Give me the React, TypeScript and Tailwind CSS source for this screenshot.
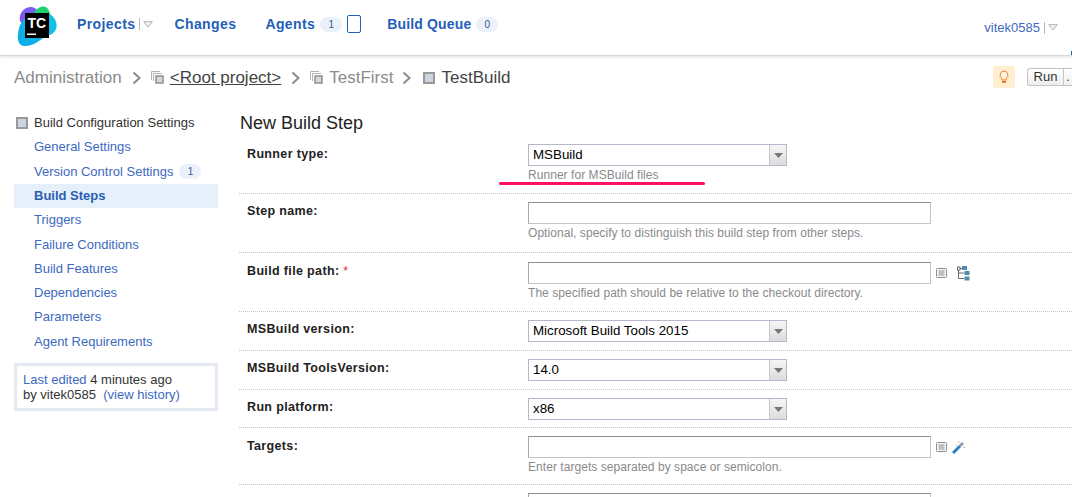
import type { ReactNode } from "react";

const sideLinks = ["General Settings", "Version Control Settings", "Build Steps", "Triggers", "Failure Conditions", "Build Features", "Dependencies", "Parameters", "Agent Requirements"];

function Logo() {
  return (
    <svg width="40" height="41" viewBox="0 0 40 41" className="shrink-0">
      <defs>
        <linearGradient id="tcBlue" x1="0" y1="1" x2="1" y2="0">
          <stop offset="0" stopColor="#0ba8e8" />
          <stop offset="1" stopColor="#12c6e6" />
        </linearGradient>
      </defs>
      <path d="M3 16C1 7 9 1 15 2c4 1 7 4 9 6L8 22z" fill="#7b5cf0" />
      <path d="M17 8c3-6 11-9 14-4 2 3 3 6 3 10H24z" fill="#1fd26f" />
      <path d="M32 9c6 2 9 10 7 15-2 6-9 6-13 9-6 5-12 8-18 8-6 0-8-6-7-12 1-7 2-11 7-15z" fill="url(#tcBlue)" />
      <rect x="8" y="8" width="24" height="25" fill="#000" />
      <path d="M10 28.5h9V30h-9z" fill="#fff" />
      <text x="10.5" y="23" fill="#fff" fontSize="14" fontWeight="700" fontFamily="Liberation Sans, sans-serif">TC</text>
    </svg>
  );
}

function Caret() {
  return (
    <span className="ml-1 flex items-center gap-[3px]">
      <span className="h-[12px] w-px bg-[#b5b5b5]" />
      <svg width="10" height="7" viewBox="0 0 10 7"><path d="M.7.7h8.6L5 6z" fill="#f4f4f4" stroke="#b0b0b0" /></svg>
    </span>
  );
}

function Badge({ n, className = "" }: { n: string; className?: string }) {
  return <span className={`flex h-[15px] w-[22px] items-center justify-center rounded-full bg-[#eaf1fa] text-[10px] font-normal tracking-normal text-[#3a5a8c] ${className}`}>{n}</span>;
}

function Chevron() {
  return (
    <svg width="10" height="14" viewBox="0 0 10 14" className="shrink-0"><path d="M1.5 1.5 7.5 7l-6 5.5" fill="none" stroke="#8c8c8c" strokeWidth="2" /></svg>
  );
}

function ProjectIcon() {
  return (
    <svg width="13" height="13" viewBox="0 0 13 13" className="shrink-0">
      <path d="M.5 9V.5H9" fill="none" stroke="#b4b4b4" />
      <path d="M2.5 10V2.5H11" fill="none" stroke="#b4b4b4" />
      <rect x="5" y="5" width="7" height="7" fill="#cfd8e3" stroke="#8f8f8f" strokeWidth="1.5" />
    </svg>
  );
}

function BuildIcon({ className = "" }: { className?: string }) {
  return <span className={`h-[12px] w-[12px] shrink-0 border-2 border-[#999] bg-[#cbd6e2] ${className}`} />;
}

function Select({ value }: { value: string }) {
  return (
    <div className="flex h-[22px] w-[259px] border border-[#b4b8c8] bg-white">
      <span className="flex-1 pl-[4px] text-[13.33px] leading-[20px] text-black">{value}</span>
      <span className="flex w-[17px] items-center justify-center border-l border-[#c8c8c8] bg-gradient-to-b from-[#f6f6f6] to-[#dcdcdc]">
        <svg width="9" height="5" viewBox="0 0 9 5"><path d="M0 0h9L4.5 5z" fill="#777" /></svg>
      </span>
    </div>
  );
}

function TextInput() {
  return <div className="h-[22px] w-[403px] border border-[#c4c4c4] border-t-[#8f8f8f] border-l-[#a8a8a8] bg-white" />;
}

function ListIcon() {
  return (
    <svg width="11" height="10" viewBox="0 0 11 10" className="block shrink-0">
      <rect x=".5" y=".5" width="10" height="9" rx="1" fill="#f4f5f6" stroke="#8c8c8c" />
      <path d="M2.5 3h6M2.5 5h6M2.5 7h6" stroke="#8a8a8a" />
    </svg>
  );
}

function TreeIcon() {
  return (
    <svg width="13" height="15" viewBox="0 0 13 15" className="block shrink-0">
      <path d="M1.5 4v8.5M3 2.5h2M1.5 7H7M1.5 12.5H7" fill="none" stroke="#6b6b6b" />
      <rect x=".5" y="1" width="2.5" height="3" fill="#fff" stroke="#6b6b6b" />
      <rect x="5" y="0" width="5" height="4" fill="#4f8cab" />
      <rect x="7.5" y="5" width="5" height="4" fill="#4f8cab" />
      <rect x="7.5" y="10.5" width="5" height="4" fill="#4f8cab" />
    </svg>
  );
}

function WandIcon() {
  return (
    <svg width="13" height="13" viewBox="0 0 13 13" className="block shrink-0">
      <path d="M1 12 8 5" stroke="#2f7fc0" strokeWidth="3" />
      <path d="M8 5 11 2" stroke="#8fa0b0" strokeWidth="3" />
      <path d="M6 1h1.5M11.5 6.5H13M4 4h1" stroke="#e08a6a" />
    </svg>
  );
}

function Row({ label, required, hint, children, h, labelPt = "pt-[1px]" }: { label: string; required?: boolean; hint?: string; children: ReactNode; h: string; labelPt?: string }) {
  return (
    <div className={`-ml-[1px] flex border-b border-dotted border-[#c4c4c4] pl-[8px] ${h}`}>
      <div className={`w-[281px] shrink-0 text-[12.5px] font-bold leading-[16px] tracking-[0.35px] text-[#222] ${labelPt}`}>
        {label}
        {required && <span className="font-normal text-[#d33]"> *</span>}
      </div>
      <div>
        {children}
        {hint && <div className="mt-[2px] text-[12px] leading-[15px] tracking-[0.05px] text-[#8a8a8a]">{hint}</div>}
      </div>
    </div>
  );
}

export default function App() {
  return (
    <div className="relative h-[497px] w-[1072px] overflow-hidden bg-white font-['Liberation_Sans',sans-serif]">
      {/* Top nav */}
      <header className="flex h-[56px] items-center justify-between border-b border-[#d8d8d8] pl-[17px] pr-[14px] shadow-[0_1px_3px_rgba(0,0,0,0.12)]">
        <div className="flex items-center">
          <div className="mb-[5px]"><Logo /></div>
          <nav className="mb-[7px] flex items-center text-[14px] font-bold tracking-[0.4px] text-[#2460b8]">
            <span className="ml-[20px]">Projects</span>
            <Caret />
            <span className="ml-[21px]">Changes</span>
            <span className="ml-[29px]">Agents</span>
            <Badge n="1" className="ml-[5px]" />
            <span className="ml-[5px] h-[18px] w-[14px] rounded-[2px] border border-[#2460b8]" />
            <span className="ml-[26px] tracking-[0.15px]">Build Queue</span>
            <Badge n="0" className="ml-[5px]" />
          </nav>
        </div>
        <div className="flex items-center text-[13px] text-[#3d69c0]">
          vitek0585
          <Caret />
        </div>
      </header>

      {/* Breadcrumb */}
      <div className="flex h-[43px] items-center justify-between pl-[14px] text-[17px]">
        <div className="flex items-center text-[#8c8c8c]">
          <span>Administration</span>
          <span className="ml-[10px] mr-[9px]"><Chevron /></span>
          <ProjectIcon />
          <span className="ml-[6px] text-[#444] underline">&lt;Root project&gt;</span>
          <span className="ml-[10px] mr-[9px]"><Chevron /></span>
          <ProjectIcon />
          <span className="ml-[6px]">TestFirst</span>
          <span className="ml-[9px] mr-[11px]"><Chevron /></span>
          <BuildIcon />
          <span className="ml-[6px] text-[#444]">TestBuild</span>
        </div>
        <div className="mb-[2px] flex items-center">
          <span className="flex h-[22px] w-[22px] items-center justify-center rounded-[3px] bg-[#ffeed2]">
            <svg width="10" height="14" viewBox="0 0 10 14">
              <path d="M5 1a4 4 0 0 0-2.2 7.3V10h4.4V8.3A4 4 0 0 0 5 1z" fill="#fff4e2" stroke="#f08030" />
              <path d="M3 11h4v1l-1 1H4l-1-1z" fill="#f06a10" />
            </svg>
          </span>
          <span className="ml-[12px] flex h-[18px] w-[45px] overflow-hidden rounded-l-[3px] border border-r-0 border-[#c4c4c4] bg-gradient-to-b from-white to-[#eeeeee] text-[13px] leading-[16px] text-[#333]">
            <span className="w-[36px] border-r border-[#c4c4c4] text-center">Run</span>
            <span className="pl-[2px]">.</span>
          </span>
        </div>
      </div>

      <div className="flex">
        {/* Sidebar */}
        <aside className="ml-[14px] w-[204px] shrink-0 pt-[12px] text-[13px]">
          <div className="flex h-[24px] items-center pl-[2px] text-[#333]">
            <BuildIcon className="mr-[6px]" />
            Build Configuration Settings
          </div>
          {sideLinks.map((link) => (
            <div
              key={link}
              className={`flex h-[24.3px] items-center pl-[20px] ${link === "Build Steps" ? "bg-[#e6f0fb] font-bold text-[#2a5db0]" : "text-[#3d69c0]"}`}
            >
              {link}
              {link === "Version Control Settings" && <Badge n="1" className="ml-[6px]" />}
            </div>
          ))}
          <div className="mt-[9px] border-[3px] border-[#e4e8f0] px-[6px] py-[6px] leading-[15px] text-[#333]">
            <span className="text-[#3d69c0]">Last edited</span> 4 minutes ago
            <br />
            by vitek0585&nbsp; <span className="text-[#3d69c0]">(view history)</span>
          </div>
        </aside>

        {/* Form */}
        <main className="ml-[22px] flex-1 pt-[14px]">
          <h1 className="mb-[2px] text-[18px] leading-[20px] text-[#222]">New Build Step</h1>
          <Row label="Runner type:" hint="Runner for MSBuild files" h="h-[59px] pt-[9px]" labelPt="pt-[2px]">
            <Select value="MSBuild" />
          </Row>
          <Row label="Step name:" hint="Optional, specify to distinguish this build step from other steps." h="h-[59px] pt-[8px]">
            <TextInput />
          </Row>
          <Row label="Build file path:" required hint="The specified path should be relative to the checkout directory." h="h-[59px] pt-[9px]">
            <div className="flex items-center">
              <TextInput />
              <span className="ml-[5px]"><ListIcon /></span>
              <span className="ml-[10px]"><TreeIcon /></span>
            </div>
          </Row>
          <Row label="MSBuild version:" h="h-[39px] pt-[8px]">
            <Select value="Microsoft Build Tools 2015" />
          </Row>
          <Row label="MSBuild ToolsVersion:" h="h-[39px] pt-[8px]">
            <Select value="14.0" />
          </Row>
          <Row label="Run platform:" h="h-[38px] pt-[8px]">
            <Select value="x86" />
          </Row>
          <Row label="Targets:" hint="Enter targets separated by space or semicolon." h="h-[57px] pt-[8px]" labelPt="pt-[2px]">
            <div className="flex items-center">
              <TextInput />
              <span className="ml-[5px]"><ListIcon /></span>
              <span className="ml-[5px]"><WandIcon /></span>
            </div>
          </Row>
          <div className="ml-[288px] mt-[8px]"><TextInput /></div>
        </main>
      </div>

      {/* Hand-drawn annotation on top of the screenshot */}
      <div className="absolute left-[499px] top-[182px] h-[3px] w-[206px] rounded-full bg-[#ff0f63]" />
      <div className="absolute left-[1071px] top-[51px] h-[4px] w-px bg-[#2460b8]" />
    </div>
  );
}
